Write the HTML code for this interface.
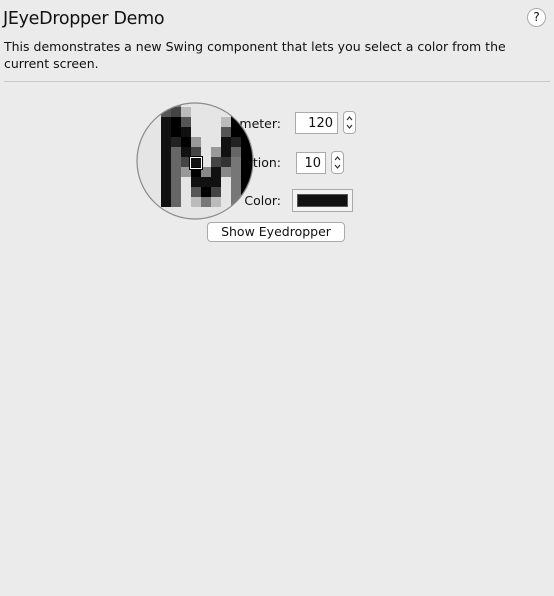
<!DOCTYPE html>
<html><head><style>
body{margin:0;width:554px;height:596px;background:#ebebeb;font-family:"DejaVu Sans","Liberation Sans",sans-serif;position:relative;overflow:hidden;color:#111}
.a{position:absolute}
.t{left:3px;top:9px;font-size:17.5px;color:#111;letter-spacing:-0.3px}
.d{left:4px;top:38px;font-size:12.5px;line-height:17px;width:530px}
.sep{left:4px;right:4px;top:81px;height:1px;background:#c8c8c8}
.help{left:527px;top:8px;width:17px;height:17px;border:1px solid #aaa;border-radius:50%;background:#fff;font-size:12px;text-align:center;line-height:17px}
.lbl{font-size:12.5px;text-align:right;width:120px}
.fld{background:#fff;border:1px solid #aaa;font-size:13px;text-align:right;box-sizing:border-box;padding-right:4px;padding-top:1px;line-height:20px}
.sp{background:#fff;border:1px solid #aaa;border-radius:4px;box-sizing:border-box}
.btn{left:207px;top:222px;width:138px;height:20px;background:#fff;border:1px solid #aaa;border-radius:4px;box-sizing:border-box;font-size:12.5px;text-align:center;line-height:18px}
</style></head><body>
<div class="a t">JEyeDropper Demo</div>
<div class="a help">?</div>
<div class="a d">This demonstrates a new Swing component that lets you select a color from the current screen.</div>
<div class="a sep"></div>
<div class="a lbl" style="left:161px;top:116px">Diameter:</div>
<div class="a lbl" style="left:161px;top:155px">Magnification:</div>
<div class="a lbl" style="left:161px;top:193px">Color:</div>
<div class="a fld" style="left:295px;top:112px;width:43px;height:22px">120</div>
<div class="a sp" style="left:343px;top:111px;width:13px;height:23px"><svg width="11" height="21"><path d="M3 8 L5.5 5 L8 8 M3 13 L5.5 16 L8 13" fill="none" stroke="#333" stroke-width="1.2"/></svg></div>
<div class="a fld" style="left:296px;top:152px;width:30px;height:22px">10</div>
<div class="a sp" style="left:331px;top:151px;width:13px;height:23px"><svg width="11" height="21"><path d="M3 8 L5.5 5 L8 8 M3 13 L5.5 16 L8 13" fill="none" stroke="#333" stroke-width="1.2"/></svg></div>
<div class="a" style="left:292px;top:189px;width:61px;height:23px;border:1px solid #aaa;box-sizing:border-box;background:#f2f2f2"><div style="margin:4px;height:13px;background:#111;border:1px solid #555;box-sizing:border-box"></div></div>
<div class="a btn">Show Eyedropper</div>
<svg class="a" style="left:0;top:0" width="554" height="596">
<defs><clipPath id="c"><circle cx="195" cy="161" r="58"/></clipPath></defs>
<g clip-path="url(#c)">
<rect x="130" y="95" width="130" height="130" fill="#e5e5e5"/>
<g id="g"></g>
</g>
<circle cx="195" cy="161" r="58" fill="none" stroke="#8a8a8a" stroke-width="1.2"/>
<rect x="190.5" y="157.5" width="11" height="11" fill="none" stroke="#fff" stroke-width="1"/>
<rect x="189.5" y="156.5" width="13" height="13" fill="none" stroke="#000" stroke-width="1"/>
</svg>
<script>
var R=[
["555","444","bbb","e5e5e5","e5e5e5","e5e5e5","e5e5e5","111","111","000"],
["111","000","555","e5e5e5","e5e5e5","e5e5e5","bbb","000","000","000"],
["111","000","111","e5e5e5","e5e5e5","e5e5e5","555","000","000","000"],
["111","222","000","999","e5e5e5","e5e5e5","111","222","000","000"],
["111","666","111","444","e5e5e5","999","111","666","000","000"],
["111","666","444","111","e5e5e5","444","333","777","000","000"],
["111","666","999","000","888","111","888","777","000","000"],
["111","666","e5e5e5","111","111","111","e5e5e5","777","000","000"],
["111","666","e5e5e5","555","000","444","e5e5e5","777","000","000"],
["111","666","e5e5e5","bbb","777","bbb","e5e5e5","777","000","000"],
["e5e5e5","e5e5e5","e5e5e5","e5e5e5","e5e5e5","e5e5e5","e5e5e5","e5e5e5","e5e5e5","e5e5e5"]];
var s="";for(var r=0;r<R.length;r++)for(var c=0;c<10;c++)s+='<rect x="'+(161+c*10)+'" y="'+(107+r*10)+'" width="10" height="10" fill="#'+R[r][c]+'"/>';
s+='<rect x="161" y="97" width="100" height="10" fill="#e5e5e5"/><rect x="161" y="97" width="20" height="10" fill="#777"/><rect x="231" y="97" width="30" height="10" fill="#000"/>';
document.getElementById("g").innerHTML=s;
</script>
</body></html>
